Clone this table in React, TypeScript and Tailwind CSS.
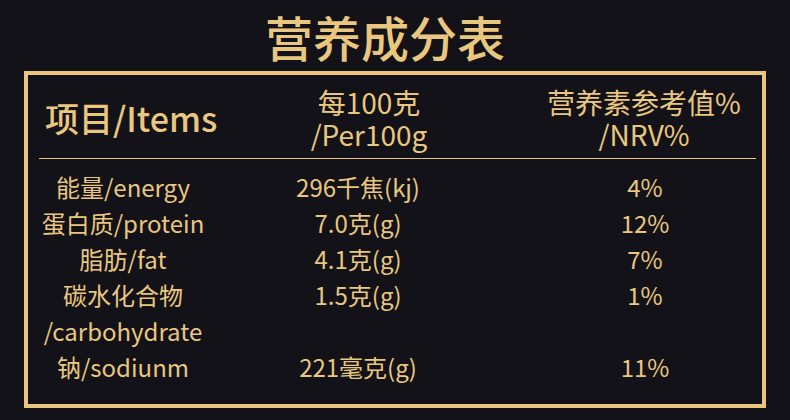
import React from 'react';

const rows = [
  { name: '能量/energy', amount: '296千焦(kj)', nrv: '4%' },
  { name: '蛋白质/protein', amount: '7.0克(g)', nrv: '12%' },
  { name: '脂肪/fat', amount: '4.1克(g)', nrv: '7%' },
  { name: '碳水化合物', amount: '1.5克(g)', nrv: '1%' },
  { name: '/carbohydrate', amount: '', nrv: '' },
  { name: '钠/sodiunm', amount: '221毫克(g)', nrv: '11%' },
];

export default function App() {
  return (
    <div
      className="w-[790px] h-[420px] bg-[#121218] text-[#e9c77e] overflow-hidden"
      style={{ fontFamily: '"Noto Sans CJK SC", "Noto Sans", sans-serif' }}
    >
      <h1 className="h-[71px] pt-[8px] pr-[20px] text-center text-[48px] leading-[56px] font-medium">营养成分表</h1>

      <div className="ml-[24px] w-[742px] h-[337px] border-[4px] border-[#e9c67c]">
        {/* header */}
        <div className="mx-[11px] mr-[6px] grid grid-cols-[179px_280px_1fr] items-center pt-[11px] pb-[8px] border-b border-[#e9c67c]">
          <div className="pl-[6px] text-[34px] leading-[40px] font-medium">项目/Items</div>
          <div className="pl-[22px] text-center text-[28px] leading-[32px]">
            <div>每100克</div>
            <div>/Per100g</div>
          </div>
          <div className="pl-[34px] text-center text-[28px] leading-[32px]">
            <div>营养素参考值%</div>
            <div>/NRV%</div>
          </div>
        </div>

        {/* data rows */}
        <div className="pt-[10px]">
          {rows.map((r, i) => (
            <div key={i} className="grid grid-cols-[190px_280px_1fr] text-[24px] leading-[36px] h-[36px]">
              <div className="text-center">{r.name}</div>
              <div className="text-center">{r.amount}</div>
              <div className="pl-[30px] text-center">{r.nrv}</div>
            </div>
          ))}
        </div>
      </div>
    </div>
  );
}
